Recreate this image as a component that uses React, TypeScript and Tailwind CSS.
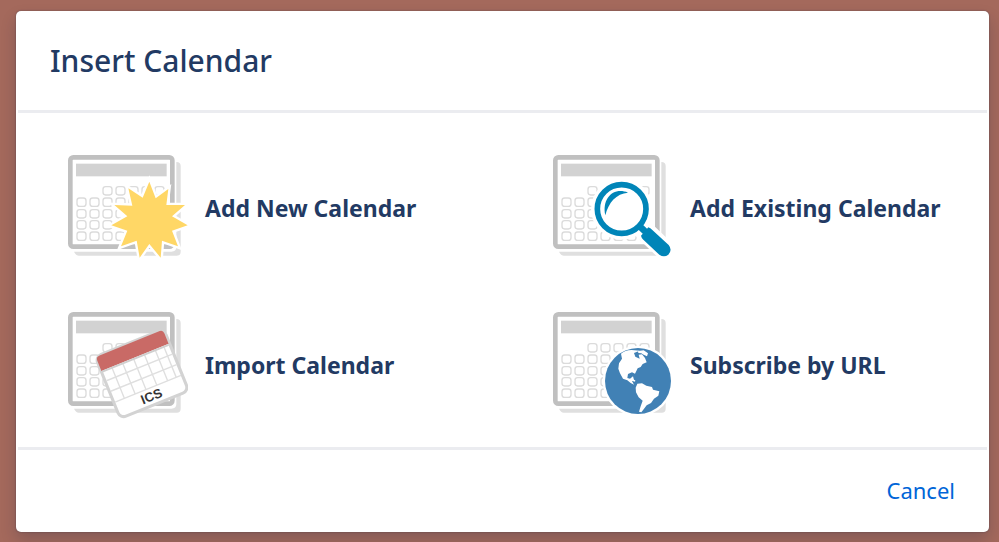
import type { ReactNode } from "react";

const STAR =
  "268,110 287,160 325,132 319,180 375,180 336,214 383,241 336,257 354,304 306,287 302,338 268,297 239,338 230,287 183,304 202,257 154,241 202,214 163,180 217,182 205,130 248,158";

const DAY_ROWS = [
  { y: 125, start: 2 },
  { y: 159, start: 0 },
  { y: 194, start: 0 },
  { y: 227, start: 0 },
  { y: 261, start: 0 },
];

// Grey calendar page shared by all four options
const CalendarIcon = ({ children }: { children: ReactNode }) => (
  <svg viewBox="24 27 360 324" className="h-[108px] w-[120px] shrink-0" aria-hidden="true">
    <path d="M349 51q13 0 13 12v257q0 12-12 12H56q-8 0-14-12h292q15 0 15-14z" fill="#dfdfdf" />
    <rect x="31" y="37" width="306" height="268" rx="9" fill="#fff" stroke="#c0c0c0" strokeWidth="14" />
    <rect x="48" y="56" width="272" height="38" fill="#d2d2d2" />
    {DAY_ROWS.map((row) =>
      [0, 1, 2, 3, 4, 5, 6]
        .filter((col) => col >= row.start)
        .map((col) => (
          <rect
            key={`${row.y}-${col}`}
            x={51 + col * 39}
            y={row.y}
            width="27"
            height="25"
            rx="8"
            fill="#fff"
            stroke="#dbdbdb"
            strokeWidth="4"
          />
        ))
    )}
    {children}
  </svg>
);

const Star = () => (
  <>
    <polygon points={STAR} fill="#fff" stroke="#fff" strokeWidth="14" />
    <polygon points={STAR} fill="#ffd766" />
  </>
);

const Magnifier = () => (
  <>
    <circle cx="230" cy="192" r="92" fill="#fff" />
    <path d="M288 247l69 66" stroke="#fff" strokeWidth="60" strokeLinecap="round" />
    <circle cx="230" cy="192" r="73" fill="#fff" stroke="#0085b8" strokeWidth="17" />
    <path d="M181 211C170 161 205 125 249 143C214 145 190 173 181 211z" fill="#0085b8" />
    <path d="M282 242l22 21" stroke="#0085b8" strokeWidth="20" />
    <path
      d="M288 272L310 247Q316 249 322 255L371 300Q383 315 370 329Q357 338 343 329L295 284Q289 278 288 272z"
      fill="#0085b8"
    />
  </>
);

const IcsPage = () => (
  <g transform="translate(104 165) rotate(-22) scale(1.03)">
    <rect x="2" y="0" width="215" height="194" rx="18" fill="#fff" stroke="#d3d3d3" strokeWidth="9" />
    <path
      d="M6 77H213M6 110H213M35 45V144M69 45V144M103 45V144M137 45V144M171 45V144M198 45V144M6 144H213"
      fill="none"
      stroke="#dfdfdf"
      strokeWidth="4"
    />
    <path d="M3 45V13Q3 1 15 1H204Q214 1 214 13V45z" fill="#c96a66" />
    <path d="M5 48H213" stroke="#cfcfcf" strokeWidth="6" />
    <text x="79" y="181" fill="#333" fontSize="38" fontWeight="700" fontFamily="Liberation Sans, sans-serif">
      ICS
    </text>
  </g>
);

const Globe = () => (
  <>
    <circle cx="279" cy="237" r="106" fill="#fff" />
    <circle cx="279" cy="237" r="99" fill="#4181b5" />
    <path
      d="M228 155Q239 145 260 144L284 146L267 153L271 164L284 170L281 158L291 157L300 168L305 181L293 186L287 195L278 199L270 215L261 211L249 216L247 228L255 230L264 223L267 234L261 237L267 248L257 243L247 235L234 230L225 214L220 200L222 184L231 170z"
      fill="#fff"
    />
    <path d="M279 147L296 145L309 154L306 163L296 158L289 154L280 153z" fill="#fff" />
    <path
      d="M277 245L291 244L304 251L321 255L324 263L343 268L340 281L327 290L318 303L305 310L296 322L289 331L282 329L287 313L293 296L281 286L273 271L272 257z"
      fill="#fff"
    />
    <path d="M260 231L271 235L270 239L260 236z" fill="#fff" />
  </>
);

const options = [
  { label: "Add New Calendar", Overlay: Star },
  { label: "Add Existing Calendar", Overlay: Magnifier },
  { label: "Import Calendar", Overlay: IcsPage },
  { label: "Subscribe by URL", Overlay: Globe },
];

const App = () => {
  return (
    <div className="min-h-screen bg-[#a4695c] pt-[11px] pr-[10px] pb-[10px] pl-4 font-['Noto_Sans',sans-serif] text-[#223a63]">
      <div
        role="dialog"
        aria-labelledby="dialog-title"
        className="rounded-[5px] bg-white shadow-[0_0_2px_rgba(9,30,66,0.4),0_8px_16px_rgba(9,30,66,0.2)]"
      >
        {/* Header */}
        <header className="mx-[2px] border-b-[3px] border-[#ebecf0] px-8 pt-[30px] pb-[29px]">
          <h1 id="dialog-title" className="text-[30px] leading-10 font-medium">
            Insert Calendar
          </h1>
        </header>

        {/* Calendar options */}
        <div className="grid grid-cols-2 gap-y-[49px] pt-[41px] pr-[3px] pb-7">
          {options.map(({ label, Overlay }) => (
            <button
              key={label}
              type="button"
              className="flex cursor-pointer items-center gap-[17px] pl-[52px] text-left text-[23px] leading-8 font-bold whitespace-nowrap"
            >
              <CalendarIcon>
                <Overlay />
              </CalendarIcon>
              {label}
            </button>
          ))}
        </div>

        {/* Footer */}
        <footer className="mx-[2px] flex justify-end border-t-[3px] border-[#ebecf0] px-8 pt-6 pb-[26px]">
          <button type="button" className="cursor-pointer text-[22px] leading-8 text-[#0065d8] hover:underline">
            Cancel
          </button>
        </footer>
      </div>
    </div>
  );
};

export default App;
